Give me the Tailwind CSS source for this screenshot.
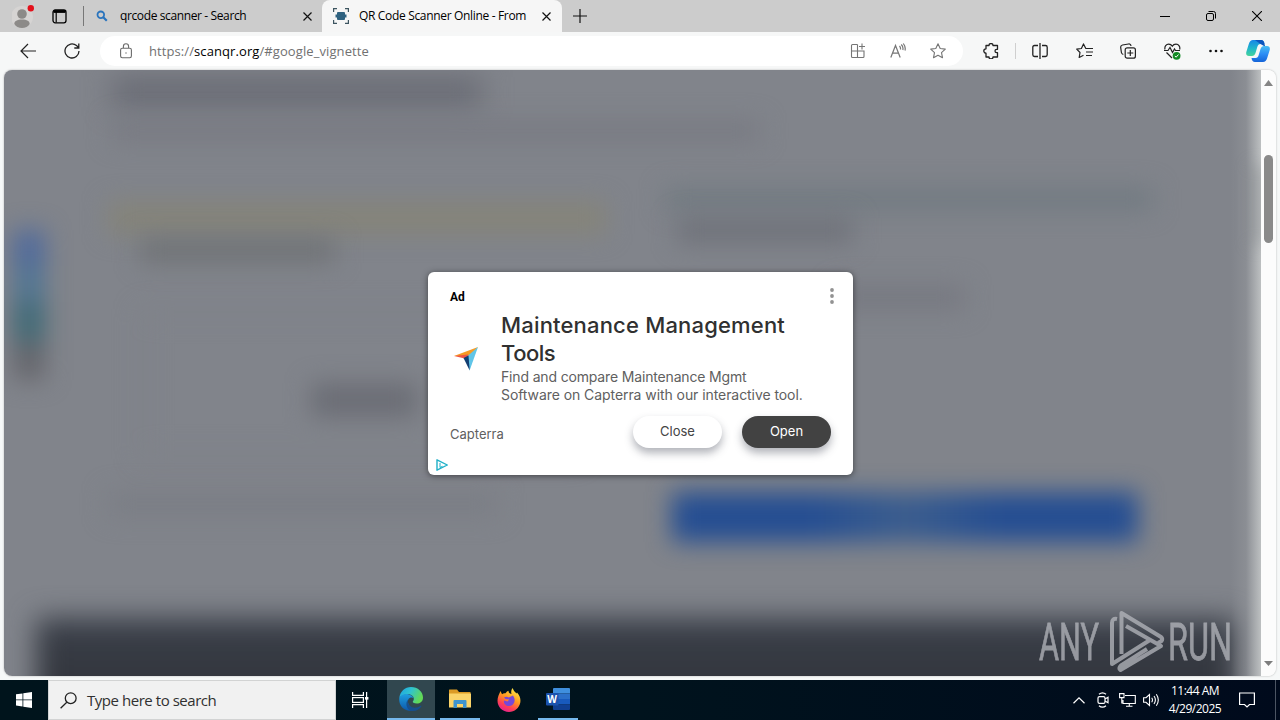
<!DOCTYPE html>
<html lang="en">

<head>
    <meta charset="UTF-8" />
    <meta name="viewport" content="width=device-width, initial-scale=1.0" />
    <title>QR Code Scanner Online</title>
    <script src="https://cdn.jsdelivr.net/npm/@tailwindcss/browser@4"></script>
</head>

<body class="bg-[#f6f8f8] font-['Open_Sans',sans-serif]">
    <div class="w-[1280px] h-[720px] flex flex-col overflow-hidden">

        <!-- tab strip -->
        <header class="h-8 shrink-0 bg-[#cccccc] flex items-stretch text-black text-xs">
            <div class="w-[322px] flex items-center pl-3">
                <svg class="w-6 h-7 shrink-0" viewBox="0 0 24 28">
                    <circle cx="10" cy="15" r="11" fill="#d6d4d3" />
                    <circle cx="10" cy="12" r="4.8" fill="#8c8a88" />
                    <path d="M2.3 22c0-3 2.700-4.500 7.700-4.500s7.700 1.500 7.700 4.500c-1.500 2.700-4.200 4-7.700 4s-6.200-1.300-7.700-4z" fill="#8c8a88" />
                    <circle cx="18.800" cy="6.200" r="3.200" fill="#e3101b" />
                </svg>
                <svg class="ml-4 w-[15px] h-[15px] shrink-0" viewBox="0 0 15 15" fill="none" stroke="#000" stroke-width="1.300">
                    <rect x="1" y="1" width="13" height="12.800" rx="2.200" />
                    <path d="M1.500 2.500h12" stroke-width="2.800" />
                    <path d="M4.200 2v11.500" stroke-width="1.200" />
                </svg>
                <div class="ml-4 w-px h-5 bg-[#777777]"></div>
                <svg class="ml-3 w-3 h-3 shrink-0" viewBox="0 0 12 12" fill="none" stroke="#2a74bd">
                    <circle cx="4.800" cy="4.800" r="3.300" stroke-width="1.800" />
                    <path d="M7.300 7.300l3.500 3.500" stroke-width="2.200" />
                </svg>
                <span class="ml-3 w-[183px] whitespace-nowrap tracking-[-0.380px]">qrcode scanner - Search</span>
                <svg class="w-[9px] h-[9px] shrink-0" viewBox="0 0 9 9" stroke="#111" stroke-width="1.200"><path d="M.5.5l8 8M8.500.5l-8 8" /></svg>
            </div>
            <div class="w-[240px] bg-[#f6f6f6] rounded-t-lg flex items-center pl-[11px]">
                <svg class="w-4 h-4 shrink-0" viewBox="0 0 16 16" fill="none" stroke="#3d5560" stroke-width="1.200">
                    <path d="M.6 4V.6H4M12 .6h3.400V4M15.400 12v3.400H12M4 15.400H.6V12" />
                    <rect x="4" y="4" width="8" height="8" rx="1" fill="#2f6280" stroke="none" />
                    <path d="M2.500 8h11" stroke="#2f6280" stroke-width="3" />
                </svg>
                <span class="ml-[10px] w-[173px] whitespace-nowrap tracking-[-0.330px]">QR Code Scanner Online - From</span>
                <svg class="ml-[10px] w-[9px] h-[9px] shrink-0" viewBox="0 0 9 9" stroke="#111" stroke-width="1.200"><path d="M.5.5l8 8M8.500.5l-8 8" /></svg>
            </div>
            <div class="flex-1 flex items-center pl-[11px]">
                <svg class="w-[14px] h-[14px]" viewBox="0 0 14 14" stroke="#111" stroke-width="1.200"><path d="M7 0v14M0 7h14" /></svg>
            </div>
            <div class="flex items-center pr-[18px] gap-[36px]">
                <svg class="w-[10px] h-[10px]" viewBox="0 0 10 10" stroke="#000" stroke-width="1"><path d="M0 5.500h10" /></svg>
                <svg class="w-[10px] h-[10px]" viewBox="0 0 10 10" fill="none" stroke="#000"><rect x=".5" y="2.500" width="7" height="7" rx="1.500" /><path d="M2.500.5H7.500Q9.500.5 9.500 2.500V7.500" /></svg>
                <svg class="w-[10px] h-[10px]" viewBox="0 0 10 10" stroke="#000" stroke-width="1.100"><path d="M0 0l10 10M10 0L0 10" /></svg>
            </div>
        </header>

        <!-- toolbar -->
        <nav class="h-[38px] shrink-0 bg-[#f6f7f7] flex items-center">
            <svg class="ml-5 w-4 h-4" viewBox="0 0 16 16" fill="none" stroke="#222" stroke-width="1.200"><path d="M16 8H1M8 1L1 8l7 7" /></svg>
            <svg class="ml-7 w-4 h-4" viewBox="0 0 16 16" fill="none" stroke="#222" stroke-width="1.300"><path d="M15 8A7 7 0 1 1 12.500 2.600L14.700 4.800M14.800.5V5H10.300" /></svg>
            <div class="ml-5 w-[863px] h-[30px] rounded-full bg-white flex items-center pl-5 text-[13px]">
                <svg class="w-3 h-4" viewBox="0 0 12 16" fill="none" stroke="#6b6b6b" stroke-width="1.100"><rect x=".6" y="5.200" width="10.800" height="9.600" rx="1.700" /><path d="M3.400 5V3.400a2.600 2.600 0 0 1 5.200 0V5" /><circle cx="6" cy="10" r=".7" fill="#6b6b6b" stroke="none" /></svg>
                <span class="ml-[17px] w-[701px] pt-px whitespace-nowrap text-[#717171] tracking-[0.090px]">https://<span class="text-black">scanqr.org</span>/#google_vignette</span>
                <svg class="w-4 h-4" viewBox="0 0 16 16" fill="none" stroke="#757575" stroke-width="1.100"><path d="M7.500 1.500H2.500Q1.500 1.500 1.500 2.500V13.500Q1.500 14.500 2.500 14.500H13Q14 14.500 14 13.500V8H1.500M7.500 1.500V14.500M12 .5v6M9 3.500h6" /></svg>
                <svg class="ml-6 w-4 h-4" viewBox="0 0 16 16" fill="none" stroke="#757575" stroke-width="1.200"><path d="M.8 14.500L5.500 2.500l4.700 12M2.500 10.200h6M9.500 3q1.300 1.500 1 3.500M11.300 1.500q2.300 2.500 1.500 5.500M13.300.5q2.600 3.300 1.700 7" /></svg>
                <svg class="ml-6 w-4 h-4" viewBox="0 0 16 16" fill="none" stroke="#757575" stroke-width="1.100" stroke-linejoin="round"><path d="M8 .8l2.200 4.700 5.100.6-3.800 3.500 1 5.100L8 12.200l-4.500 2.500 1-5.100L.7 6.100l5.100-.6z" /></svg>
            </div>
            <svg class="ml-5 w-4 h-4" viewBox="0 0 16 16" fill="none" stroke="#222" stroke-width="1.300" stroke-linejoin="round"><path d="M3 2.500H6a2 2 0 0 1 4 0h4.500V6.300h-.8a1.700 1.700 0 0 0 0 3.400h.8V14H10a2 2 0 0 1-4 0H3V10.200a2.200 2.200 0 0 1 0-4.400z" /></svg>
            <div class="ml-4 w-px h-4 bg-[#cfcfcf]"></div>
            <svg class="ml-4 w-4 h-4" viewBox="0 0 16 16" fill="none" stroke="#222" stroke-width="1.300"><path d="M6 2.500H2.500Q.8 2.500.8 4.200V11.800Q.8 13.500 2.500 13.500H6M10 2.500H13.500Q15.200 2.500 15.200 4.200V11.800Q15.200 13.500 13.500 13.500H10M8 0v16" /></svg>
            <svg class="ml-7 w-[17px] h-4" viewBox="0 0 17 16" fill="none" stroke="#222" stroke-width="1.200" stroke-linejoin="round"><path d="M11 5.500H9.800L7.500.9 5.400 5.500.7 6.200 4 9.500l-.8 5L7.500 12.300M10 5.500h7M10 9h7M10 12.500h6" /></svg>
            <svg class="ml-[27px] w-4 h-4" viewBox="0 0 16 16" fill="none" stroke="#222" stroke-width="1.200"><path d="M3.300 11.500Q1.700 11 1.400 9.500L.7 4.500Q.5 2.500 2.500 2L8.500 1Q10.700.7 11 3" /><rect x="5.200" y="4.800" width="10.200" height="10.400" rx="2" /><path d="M10.300 7v6M7.300 10h6" /></svg>
            <svg class="ml-7 w-[17px] h-[17px]" viewBox="0 0 17 17" fill="none" stroke="#222" stroke-width="1.200"><path d="M1 6.500C.3 3.500 2.300 1.200 4.700 1.200 6.500 1.200 7.500 2 8.300 3.200 9 2 10.200 1.200 12 1.200c2.700 0 4.500 2.800 3.600 5.300M0 7.500h4l2-3 2.500 5 2-3.500 1 1.500H16M2.500 9.500L8 15" /><circle cx="12.600" cy="12.800" r="3.900" fill="#128a24" stroke="none" /><path d="M10.800 12.900l1.300 1.300 2.400-2.700" stroke="#fff" stroke-width="1" /></svg>
            <svg class="ml-7 w-[14px] h-4" viewBox="0 0 14 16" fill="#111"><circle cx="1.500" cy="8" r="1.300" /><circle cx="7" cy="8" r="1.300" /><circle cx="12.500" cy="8" r="1.300" /></svg>
            <svg class="ml-[23px] w-6 h-[22px]" viewBox="0 0 24 22">
                <defs>
                    <linearGradient id="cpA" x1="0" y1="0" x2="0" y2="1"><stop offset="0" stop-color="#1686e8" /><stop offset=".55" stop-color="#21b8c8" /><stop offset="1" stop-color="#45d39a" /></linearGradient>
                    <linearGradient id="cpB" x1="0" y1="0" x2="0" y2="1"><stop offset="0" stop-color="#47bdf2" /><stop offset=".5" stop-color="#2b8df5" /><stop offset="1" stop-color="#1464d8" /></linearGradient>
                </defs>
                <path d="M7 0H15Q18 0 18.500 4H14.500Q12 4 11.300 7L9.500 13Q8.500 16 6 16H3Q-.5 16 .3 12L2.800 4Q4 0 7 0z" fill="url(#cpA)" />
                <path d="M17 22H9Q6 22 5.500 18H9.500Q12 18 12.700 15L14.500 9Q15.500 6 18 6H21Q24.500 6 23.700 10L21.200 18Q20 22 17 22z" fill="url(#cpB)" />
                <path d="M9 0H15Q18 0 18.500 4L19 6H18L14.500 4z" fill="#0b55bd" />
            </svg>
        </nav>

        <!-- page -->
        <main class="h-[606px] shrink-0 mx-1 flex rounded-lg overflow-hidden shadow-[0_0_2px_#aaaaaa]">
            <div class="relative w-[1257px] h-full bg-[#81848b] overflow-hidden">

                <!-- blurred site below the ad -->
                <div class="h-full flex flex-col">
                    <div class="pl-[108px] pt-[7px] flex flex-col gap-[14px]">
                        <div class="w-[370px] h-[30px] bg-[#696b74] blur-[14px]"></div>
                        <div class="w-[648px] h-5 bg-[#787a82] blur-[12px]"></div>
                    </div>
                    <div class="mt-[47px] h-[364px] flex">
                        <div class="pt-[29px] pl-[9px] w-[104px]">
                            <div class="mt-[13px] w-8 h-[150px] flex flex-col blur-[12px]">
                                <div class="h-[36px] bg-[#506a9c]"></div>
                                <div class="h-[36px] bg-[#527693]"></div>
                                <div class="h-[40px] bg-[#406a77]"></div>
                                <div class="h-[38px] bg-[#65666c]"></div>
                            </div>
                        </div>
                        <div class="w-[557px] pt-[14px] flex flex-col">
                            <div class="w-[498px] h-8 bg-[#858479] blur-[12px]"></div>
                            <div class="ml-8 mt-1 w-[195px] h-[25px] bg-[#707376] blur-[12px]"></div>
                            <div class="ml-8 mt-[46px] w-[440px] h-[150px] border-[6px] border-[#7e8188] blur-[12px] flex items-center justify-center">
                                <div class="ml-2 mt-8 w-[106px] h-[34px] bg-[#6b6d75]"></div>
                            </div>
                            <div class="mt-[33px] w-[390px] h-6 bg-[#7b7e85] blur-[12px]"></div>
                        </div>
                        <div class="w-[488px] flex flex-col">
                            <div class="h-[22px] bg-[#717a81] blur-[12px]"></div>
                            <div class="ml-3 mt-2 w-[176px] h-[25px] bg-[#6f727a] blur-[12px]"></div>
                            <div class="ml-[170px] mt-[42px] w-[130px] h-[25px] bg-[#777981] blur-[12px]"></div>
                            <div class="ml-[7px] mt-[182px] w-[466px] h-[50px] shrink-0 blur-[12px] bg-linear-to-r from-[#254e92] from-30% via-[#3b5d8e] to-[#254e92] to-70%"></div>
                        </div>
                    </div>
                    <div class="mt-[76px] ml-8 w-[1200px] h-[120px] shrink-0 bg-linear-to-b from-[#3a3f49] to-[#2d2f34] blur-[14px]"></div>
                </div>
                <div class="absolute right-0 top-0 w-[30px] h-full bg-linear-to-r from-transparent via-[#9a9da1]/40 to-[#bdc0c1]"></div>
                <div class="absolute right-0 top-[95px] w-[9px] h-[80px] bg-[#7b7e82]/60 blur-[8px]"></div>

                <!-- ad dialog -->
                <section class="absolute left-[424px] top-[202px] w-[425px] h-[203px] rounded-md bg-white shadow-[0_1px_6px_rgba(0,0,0,0.500)] px-[22px] pt-[14px] flex flex-col font-['Inter',sans-serif]">
                    <div class="h-5 flex items-center justify-between">
                        <span class="pt-0.5 font-['Roboto'] font-bold text-[12px] text-black">Ad</span>
                        <svg class="w-1 h-4 -mr-[3px]" viewBox="0 0 4 16" fill="#929292"><circle cx="2" cy="2" r="1.900" /><circle cx="2" cy="8" r="1.900" /><circle cx="2" cy="14" r="1.900" /></svg>
                    </div>
                    <div class="mt-[5px] h-[94px] flex">
                        <svg class="ml-1 mt-9 w-6 h-6 shrink-0" viewBox="0 0 24 24">
                            <path d="M0 9L24 0 14 12 9 9z" fill="#f69b24" />
                            <path d="M0 9L14 7.500V12.300z" fill="#ef5644" />
                            <path d="M24 0L13 9.500l2.600 14z" fill="#60c5e8" />
                            <path d="M9.500 11L14.500 8.500l1.200 15z" fill="#123f72" />
                        </svg>
                        <div class="ml-[23px] whitespace-nowrap">
                            <h1 class="text-[22px] leading-7 font-medium text-[#303030]"><span class="tracking-[0.180px]">Maintenance Management</span><br><span class="tracking-[-0.500px]">Tools</span></h1>
                            <p class="pt-px text-[14px] leading-[18px] text-[#606060]"><span class="tracking-[-0.160px]">Find and compare Maintenance Mgmt</span><br><span class="tracking-[-0.070px]">Software on Capterra with our interactive tool.</span></p>
                        </div>
                    </div>
                    <div class="mt-[11px] h-8 flex">
                        <span class="flex-1 mt-2 text-[13px] leading-5 text-[#606060]">Capterra</span>
                        <button class="w-[89px] h-8 rounded-full bg-white text-[13px] text-[#444444] shadow-[0_5px_8px_rgba(60,64,80,0.400)]">Close</button>
                        <button class="ml-5 w-[89px] h-8 rounded-full bg-[#424242] text-[13px] text-white shadow-[0_5px_8px_rgba(60,64,80,0.400)]">Open</button>
                    </div>
                    <svg class="mt-[11px] -ml-[14px] w-3 h-3" viewBox="0 0 12 12" fill="none" stroke="#1fb0c8" stroke-width="1.400" stroke-linejoin="round"><path d="M1 .8v10.400L11.300 6z" /><path d="M4 4v4.500l2.500-1.200" stroke-width="1" /></svg>
                </section>

                <!-- watermark -->
                <svg class="absolute left-[1030px] top-[536px] w-[220px] h-[70px] opacity-75" viewBox="0 0 220 70" fill="#b6b8be" stroke="#b6b8be">
                    <text x="5" y="54" font-family="Roboto" font-size="52" stroke-width=".8" textLength="60" lengthAdjust="spacingAndGlyphs">ANY</text>
                    <text x="134" y="54" font-family="Roboto" font-size="52" stroke-width=".8" textLength="64" lengthAdjust="spacingAndGlyphs">RUN</text>
                    <g fill="none" stroke-width="4" stroke-linejoin="round">
                        <path d="M87.500 48V7L127 31Q129 33 127.500 35L124 37" />
                        <path d="M83 13Q78 12 78 17V58L116 34" />
                        <path d="M92 20L127 40 86.500 64Q84 62.500 87 59.500L113 43" />
                    </g>
                </svg>
            </div>

            <!-- scrollbar -->
            <div class="w-[15px] h-full bg-[#fcfcfc] flex flex-col items-center">
                <svg class="mt-[10px] w-[9px] h-[6px]" viewBox="0 0 9 6" fill="#858585"><path d="M4.500 0L9 6H0z" /></svg>
                <div class="mt-[69px] w-[9px] h-[88px] rounded-full bg-[#8a8a8a]"></div>
                <svg class="mt-auto mb-[10px] w-[9px] h-[5px]" viewBox="0 0 9 5" fill="#7d7d7d"><path d="M0 0h9L4.500 5z" /></svg>
            </div>
        </main>

        <!-- taskbar -->
        <footer class="mt-1 h-10 shrink-0 bg-linear-to-r from-[#00141c] via-[#00131d] to-[#000a1c] flex text-white">
            <div class="w-12 flex items-center justify-center">
                <svg class="w-4 h-4" viewBox="0 0 16 16" fill="#fff"><path d="M0 2.300L6.500 1.400V7.500H0zM7.300 1.300L16 0V7.500H7.300zM0 8.300H6.500V14.500L0 13.600zM7.300 8.300H16V16L7.300 14.700z" /></svg>
            </div>
            <div class="w-72 bg-[#f1f1f1] border border-[#d2d3d3] flex items-center pl-[11px] text-[#303030]">
                <svg class="w-[17px] h-[17px]" viewBox="0 0 17 17" fill="none" stroke="#222" stroke-width="1.300"><circle cx="10.700" cy="6.200" r="5.400" /><path d="M6.800 10.200L.6 16.300" /></svg>
                <span class="ml-[10px] text-[15px] whitespace-nowrap tracking-[-0.460px]">Type here to search</span>
            </div>
            <div class="w-[51px] flex items-center justify-center">
                <svg class="mr-[3px] w-[17px] h-4" viewBox="0 0 17 16" fill="none" stroke="#fff" stroke-width="1.200"><path d="M.6 0V3.300H11.400V0M.6 16V12.700H11.400V16M14.600 0V16" /><rect x=".6" y="5.600" width="10.800" height="4.800" /><path d="M13 6.300h3.400" stroke-width="2.600" /></svg>
            </div>
            <div class="w-12 bg-[#31474f] border-b-2 border-[#76b9ed] flex items-center justify-center">
                <svg class="w-6 h-6" viewBox="0 0 24 24">
                    <defs>
                        <linearGradient id="edA" x1="0" y1="0" x2="1" y2=".4"><stop offset="0" stop-color="#1ba3e3" /><stop offset=".5" stop-color="#30c3cf" /><stop offset="1" stop-color="#62d957" /></linearGradient>
                        <linearGradient id="edB" x1="0" y1="0" x2="0" y2="1"><stop offset="0" stop-color="#1e9fe0" /><stop offset="1" stop-color="#0d57a9" /></linearGradient>
                    </defs>
                    <path d="M.3 11C1 4.500 6 0 12 0c7 0 12 5 12 10.500 0 4-3 6-6.200 6-3 0-4.300-1-4-1.900.3-.7 1.200-1.300 1-3C14.500 9 12 7.300 9 7.300 5.500 7.300 2 9 .3 11z" fill="url(#edA)" />
                    <path d="M.3 11C1.700 7.800 5.500 6.500 9 7.200c3.400.6 5.500 2.700 5.700 4-1-1.100-4.200-1.300-5.400 1.300-1.500 4 2 9.300 6.500 9.700C14 23.500 12 24 10 23.800 4 23-.5 18 .3 11z" fill="url(#edB)" />
                    <path d="M9.200 12.600c-1.500 4.200 2.300 8 6.600 8.100 2.200 0 4.300-1 5.800-2 .6-.3 1 .2.700.7C20.300 22.500 17 24.200 13 24c-5-.5-7.500-8-3.800-11.400z" fill="#174f8d" />
                </svg>
            </div>
            <div class="ml-[5px] w-10 border-b-2 border-[#76b9ed] flex items-center justify-center">
                <svg class="w-[22px] h-5" viewBox="0 0 22 20"><path d="M0 1Q0 .5.500.5H8L10 3H21.500V18H0z" fill="#dc9b25" /><path d="M0 4.500H22V18.500H0z" fill="#fbd469" /><path d="M4.500 19V12Q4.500 11 5.500 11H16.500Q17.500 11 17.500 12V19H14V15H8V19z" fill="#3d94d0" /></svg>
            </div>
            <div class="ml-[5px] w-12 flex items-center justify-center">
                <svg class="w-6 h-6" viewBox="0 0 24 24">
                    <defs><linearGradient id="ffA" x1=".8" y1="0" x2=".3" y2="1"><stop offset="0" stop-color="#fff04a" /><stop offset=".45" stop-color="#ff9a20" /><stop offset=".75" stop-color="#ff4054" /><stop offset="1" stop-color="#e52090" /></linearGradient></defs>
                    <path d="M3.500 3L5 6.200Q6.500 5 8.500 5.300 10 3 11.500 2.700 11.300 4.500 13 5.600L14.500 6Q13.500 3 15.500 0 17 4 19.500 5.500L20 4.500C23 7.500 23.800 11 23.300 14.500 22.300 20 17.500 24 12 24 5.500 24 .5 19 .5 12.800.5 9 2 6.500 3.500 3z" fill="url(#ffA)" />
                    <path d="M7 9.500Q9.500 8 11.800 9.500L16 7.500Q18.500 11 17.200 14.500 15.500 18 12 18C8.500 18 6.300 15 7 12.500L10.500 13.500 12.300 11.500 8.500 11z" fill="#7648d8" />
                </svg>
            </div>
            <div class="ml-[5px] w-10 border-b-2 border-[#76b9ed] flex items-center justify-center">
                <svg class="w-6 h-[22px]" viewBox="0 0 24 22"><path d="M8 0H23Q24 0 24 1V5.500H7V1Q7 0 8 0z" fill="#3f8fde" /><path d="M7 5.500H24V11H7z" fill="#2b6fc8" /><path d="M7 11H24V16.500H7z" fill="#185abd" /><path d="M7 16.500H24V21Q24 22 23 22H8Q7 22 7 21z" fill="#103f91" /><rect y="5" width="12.500" height="12.500" rx="1" fill="#1b52ad" /><text x="6.200" y="14.600" text-anchor="middle" font-family="Open Sans" font-weight="700" font-size="10" fill="#fff">W</text></svg>
            </div>
            <div class="ml-auto flex items-center">
                <svg class="w-3 h-[7px]" viewBox="0 0 12 7" fill="none" stroke="#fff" stroke-width="1.200"><path d="M.5 6.300L6 .9l5.500 5.400" /></svg>
                <svg class="ml-3 w-3 h-4" viewBox="0 0 12 16" fill="none" stroke="#fff" stroke-width="1.200"><rect x="1" y="4.600" width="7" height="6.800" rx="1.500" /><path d="M8 7l3-1.700v5.400L8 9M2 2.300Q5.500-.7 9 2.300M2 13.700Q5.500 16.700 9 13.700" /></svg>
                <svg class="ml-[10px] w-[17px] h-[14px]" viewBox="0 0 17 14" fill="none" stroke="#fff" stroke-width="1.100"><path d="M6 2.500H16.300V10.500H4V7M10.300 10.500V13.300M7 13.300h6.500M.6.600H5V4.600H.6zM2.800 4.600V10.500" /></svg>
                <svg class="ml-[7px] w-[17px] h-[14px]" viewBox="0 0 17 14" fill="none" stroke="#fff" stroke-width="1.100"><path d="M.6 4.700H3L6.500 1.500V12.500L3 9.300H.6zM8.700 4.700q1.600 2.300 0 4.600M11 3q2.800 4 0 8M13.300 1.300q4 5.700 0 11.400" /></svg>
                <div class="ml-2 w-[54px] text-center text-xs leading-[18px] tracking-[-0.500px] whitespace-nowrap">11:44 AM<br>4/29/2025</div>
                <svg class="ml-[17px] w-4 h-4" viewBox="0 0 16 16" fill="none" stroke="#fff" stroke-width="1.200"><path d="M.6 1H15.400V12.500H10.500L8 15 5.500 12.500H.6z" /></svg>
                <div class="ml-[20px] mr-1 w-px h-10 bg-[#4c5563]"></div>
            </div>
        </footer>
    </div>
</body>

</html>
